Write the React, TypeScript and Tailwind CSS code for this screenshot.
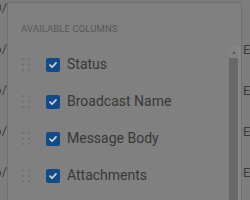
const ROWS = ["Status", "Broadcast Name", "Message Body", "Attachments"];
const LEFT = ["06/10/", "05/16/", "05/16/", "05/16/", "05/16/"];
const RIGHT = ["ES", "ES", "ES", "ES"];

function DragHandle() {
  return (
    <div className="grid grid-cols-2 gap-x-[4px] gap-y-[3.5px] w-[8px]">
      {Array.from({ length: 6 }).map((_, i) => (
        <span key={i} className="w-[2px] h-[2px] rounded-full bg-[#6c6c6c]" />
      ))}
    </div>
  );
}

function Checkbox() {
  return (
    <div className="w-[14px] h-[14px] rounded-[2px] bg-[#124a88] flex items-center justify-center">
      <svg width="10" height="10" viewBox="0 0 10 10" fill="none">
        <path d="M2 5.2 L4.1 7.2 L8 2.9" stroke="#d0d3d8" strokeWidth="1.7" strokeLinecap="round" strokeLinejoin="round" />
      </svg>
    </div>
  );
}

function Scrollbar() {
  return (
    <div className="w-[9px] flex flex-col items-center bg-[#838383]">
      <div className="h-[12px] flex items-center justify-center">
        <div className="w-0 h-0 border-l-[2.5px] border-r-[2.5px] border-b-[3px] border-l-transparent border-r-transparent border-b-[#555555]" />
      </div>
      <div className="w-full flex-1 bg-[#686868]" />
    </div>
  );
}

export default function App() {
  return (
    <div
      className="w-[250px] h-[200px] flex bg-[#7d7d7d] overflow-hidden"
      style={{ fontFamily: "Roboto, 'Open Sans', sans-serif" }}
    >
      <div className="w-[7px] flex flex-col items-end overflow-hidden gap-[25px] text-[13px] leading-[16px] text-[#3a3a3a]">
        {LEFT.map((t, i) => (
          <div key={i} className="whitespace-nowrap">{t}</div>
        ))}
      </div>

      <div className="w-[235px] mt-[2px] border-l border-r border-t border-[#6f6f6f] bg-[#808080] flex flex-col">
        <div className="pl-[13px] pt-[19px] h-[43px] text-[9.5px] leading-[14px] tracking-[0.01em] text-[#575757]">
          AVAILABLE COLUMNS
        </div>
        <div className="flex flex-1">
          <div className="flex-1 flex flex-col">
            {ROWS.map((r) => (
              <div key={r} className="h-[37px] flex items-center pl-[14px]">
                <DragHandle />
                <div className="ml-[16px]">
                  <Checkbox />
                </div>
                <span className="ml-[7px] text-[14px] text-[#383838]">{r}</span>
              </div>
            ))}
          </div>
          <Scrollbar />
          <div className="w-[3px] bg-[#868686]" />
        </div>
      </div>

      <div className="flex-1 overflow-hidden flex flex-col pt-[42px] gap-[25px] text-[13px] leading-[16px] text-[#3a3a3a] pl-[1px]">
        {RIGHT.map((t, i) => (
          <div key={i} className="whitespace-nowrap">{t}</div>
        ))}
      </div>
    </div>
  );
}
